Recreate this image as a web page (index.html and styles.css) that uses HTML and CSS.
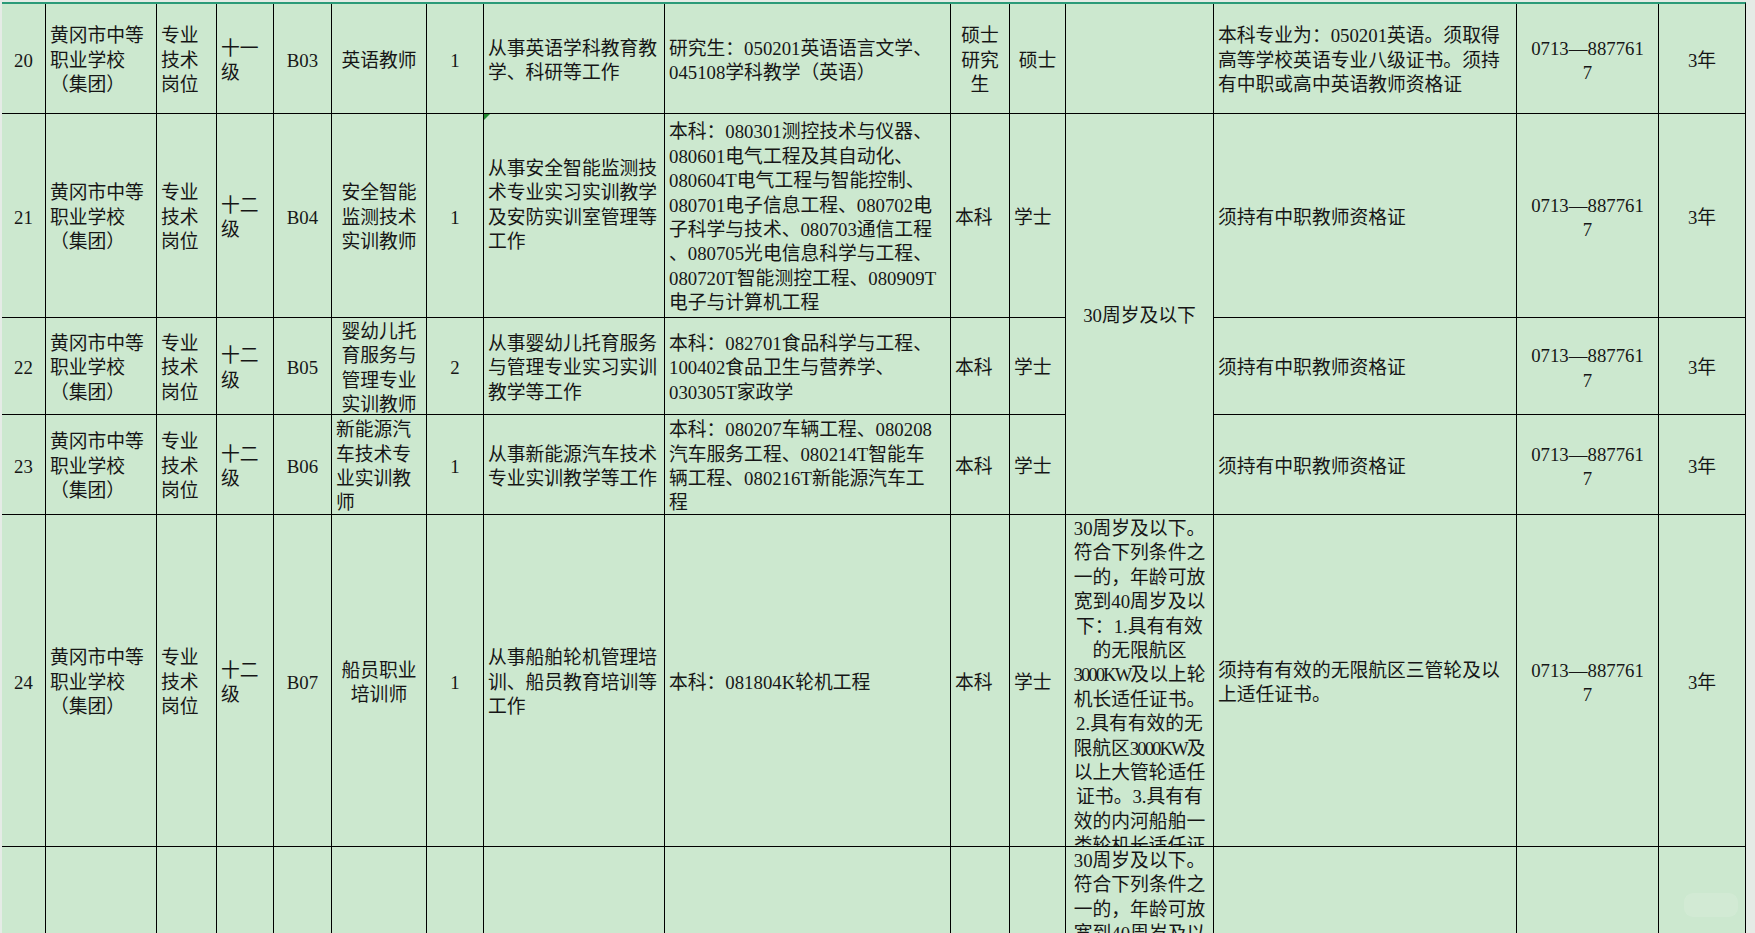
FILE: index.html
```html
<!DOCTYPE html>
<html lang="zh-CN">
<head>
<meta charset="utf-8">
<title>岗位表</title>
<link rel="stylesheet" href="styles.css">
</head>
<body>
<div class="sheet">
  <div class="grid">
    <!-- Row 20 -->
    <div class="c ctr"><span>20</span></div>
    <div class="c"><span>黄冈市中等<br>职业学校<br>（集团）</span></div>
    <div class="c"><span>专业<br>技术<br>岗位</span></div>
    <div class="c"><span>十一<br>级</span></div>
    <div class="c ctr"><span>B03</span></div>
    <div class="c ctr"><span>英语教师</span></div>
    <div class="c ctr"><span>1</span></div>
    <div class="c"><span>从事英语学科教育教<br>学、科研等工作</span></div>
    <div class="c"><span>研究生：050201英语语言文学、<br>045108学科教学（英语）</span></div>
    <div class="c ctr"><span>硕士<br>研究<br>生</span></div>
    <div class="c ctr"><span>硕士</span></div>
    <div class="c"><span></span></div>
    <div class="c"><span>本科专业为：050201英语。须取得<br>高等学校英语专业八级证书。须持<br>有中职或高中英语教师资格证</span></div>
    <div class="c ctr"><span>0713—887761<br>7</span></div>
    <div class="c ctr"><span>3年</span></div>

    <!-- Row 21 -->
    <div class="c ctr"><span>21</span></div>
    <div class="c"><span>黄冈市中等<br>职业学校<br>（集团）</span></div>
    <div class="c"><span>专业<br>技术<br>岗位</span></div>
    <div class="c"><span>十二<br>级</span></div>
    <div class="c ctr"><span>B04</span></div>
    <div class="c ctr"><span>安全智能<br>监测技术<br>实训教师</span></div>
    <div class="c ctr"><span>1</span></div>
    <div class="c tri"><span>从事安全智能监测技<br>术专业实习实训教学<br>及安防实训室管理等<br>工作<br>&nbsp;</span></div>
    <div class="c"><span>本科：080301测控技术与仪器、<br>080601电气工程及其自动化、<br>080604T电气工程与智能控制、<br>080701电子信息工程、080702电<br>子科学与技术、080703通信工程<br>、080705光电信息科学与工程、<br>080720T智能测控工程、080909T<br>电子与计算机工程</span></div>
    <div class="c"><span>本科</span></div>
    <div class="c"><span>学士</span></div>
    <div class="c ctr merged"><span>30周岁及以下</span></div>
    <div class="c"><span>须持有中职教师资格证</span></div>
    <div class="c ctr"><span>0713—887761<br>7</span></div>
    <div class="c ctr"><span>3年</span></div>

    <!-- Row 22 -->
    <div class="c ctr"><span>22</span></div>
    <div class="c"><span>黄冈市中等<br>职业学校<br>（集团）</span></div>
    <div class="c"><span>专业<br>技术<br>岗位</span></div>
    <div class="c"><span>十二<br>级</span></div>
    <div class="c ctr"><span>B05</span></div>
    <div class="c ctr"><span>婴幼儿托<br>育服务与<br>管理专业<br>实训教师</span></div>
    <div class="c ctr"><span>2</span></div>
    <div class="c"><span>从事婴幼儿托育服务<br>与管理专业实习实训<br>教学等工作</span></div>
    <div class="c"><span>本科：082701食品科学与工程、<br>100402食品卫生与营养学、<br>030305T家政学</span></div>
    <div class="c"><span>本科</span></div>
    <div class="c"><span>学士</span></div>
    <div class="c"><span>须持有中职教师资格证</span></div>
    <div class="c ctr"><span>0713—887761<br>7</span></div>
    <div class="c ctr"><span>3年</span></div>

    <!-- Row 23 -->
    <div class="c ctr"><span>23</span></div>
    <div class="c"><span>黄冈市中等<br>职业学校<br>（集团）</span></div>
    <div class="c"><span>专业<br>技术<br>岗位</span></div>
    <div class="c"><span>十二<br>级</span></div>
    <div class="c ctr"><span>B06</span></div>
    <div class="c"><span>新能源汽<br>车技术专<br>业实训教<br>师</span></div>
    <div class="c ctr"><span>1</span></div>
    <div class="c"><span>从事新能源汽车技术<br>专业实训教学等工作</span></div>
    <div class="c"><span>本科：080207车辆工程、080208<br>汽车服务工程、080214T智能车<br>辆工程、080216T新能源汽车工<br>程</span></div>
    <div class="c"><span>本科</span></div>
    <div class="c"><span>学士</span></div>
    <div class="c"><span>须持有中职教师资格证</span></div>
    <div class="c ctr"><span>0713—887761<br>7</span></div>
    <div class="c ctr"><span>3年</span></div>

    <!-- Row 24 -->
    <div class="c ctr"><span>24</span></div>
    <div class="c"><span>黄冈市中等<br>职业学校<br>（集团）</span></div>
    <div class="c"><span>专业<br>技术<br>岗位</span></div>
    <div class="c"><span>十二<br>级</span></div>
    <div class="c ctr"><span>B07</span></div>
    <div class="c ctr"><span>船员职业<br>培训师</span></div>
    <div class="c ctr"><span>1</span></div>
    <div class="c"><span>从事船舶轮机管理培<br>训、船员教育培训等<br>工作</span></div>
    <div class="c"><span>本科：081804K轮机工程</span></div>
    <div class="c"><span>本科</span></div>
    <div class="c"><span>学士</span></div>
    <div class="c ctr top"><span>30周岁及以下。<br>符合下列条件之<br>一的，年龄可放<br>宽到40周岁及以<br>下：1.具有有效<br>的无限航区<br><span class="tight">3000KW</span>及以上轮<br>机长适任证书。<br>2.具有有效的无<br>限航区<span class="tight">3000KW</span>及<br>以上大管轮适任<br>证书。3.具有有<br>效的内河船舶一<br>类轮机长适任证<br>书。</span></div>
    <div class="c"><span>须持有有效的无限航区三管轮及以<br>上适任证书。</span></div>
    <div class="c ctr"><span>0713—887761<br>7</span></div>
    <div class="c ctr"><span>3年</span></div>

    <!-- Row 25 -->
    <div class="c"><span></span></div>
    <div class="c"><span></span></div>
    <div class="c"><span></span></div>
    <div class="c"><span></span></div>
    <div class="c"><span></span></div>
    <div class="c"><span></span></div>
    <div class="c"><span></span></div>
    <div class="c"><span></span></div>
    <div class="c"><span></span></div>
    <div class="c"><span></span></div>
    <div class="c"><span></span></div>
    <div class="c ctr top"><span>30周岁及以下。<br>符合下列条件之<br>一的，年龄可放<br>宽到40周岁及以<br>下：1.具有有效<br>的无限航区</span></div>
    <div class="c"><span></span></div>
    <div class="c"><span></span></div>
    <div class="c"><span></span></div>
  </div>
</div>
<div class="watermark"></div>
</body>
</html>
```

FILE: styles.css
```css
html, body {
  margin: 0;
  padding: 0;
}

body {
  width: 1755px;
  height: 933px;
  overflow: hidden;
  background: #e5ebe6;
  position: relative;
  font-family: "Liberation Serif", "Noto Sans CJK SC", serif;
  font-size: 18.8px;
  color: #161616;
}

.sheet {
  padding: 2px 0 0 2px;
}

.grid {
  display: grid;
  grid-template-columns: 43px 110px 59px 56px 57px 94px 56px 180px 285px 58px 55px 147px 302px 141px 86px;
  grid-template-rows: 109px 203px 96px 99px 331px 150px;
  gap: 1px;
  width: max-content;
  background: #000;
  border-top: 2px solid #2b9a78;
  border-right: 1px solid #000;
}

.c {
  background: #cce8cf;
  display: flex;
  align-items: center;
  justify-content: flex-start;
  overflow: hidden;
  white-space: nowrap;
  padding: 5px 3px 0 4px;
  line-height: 24.4px;
  position: relative;
  box-sizing: border-box;
}

.c.ctr {
  justify-content: center;
  text-align: center;
  padding-left: 2px;
  padding-right: 2px;
}

.c.top {
  align-items: flex-start;
  padding-top: 2px;
}

.c.merged {
  grid-row: span 3;
}

.tight {
  letter-spacing: -2px;
}

.c.tri::before {
  content: "";
  position: absolute;
  left: 0;
  top: 0;
  border-top: 6px solid #1f8b30;
  border-right: 6px solid transparent;
}

.watermark {
  position: absolute;
  left: 1684px;
  top: 893px;
  width: 54px;
  height: 24px;
  border-radius: 9px;
  background: rgba(255, 255, 255, 0.12);
}
```
